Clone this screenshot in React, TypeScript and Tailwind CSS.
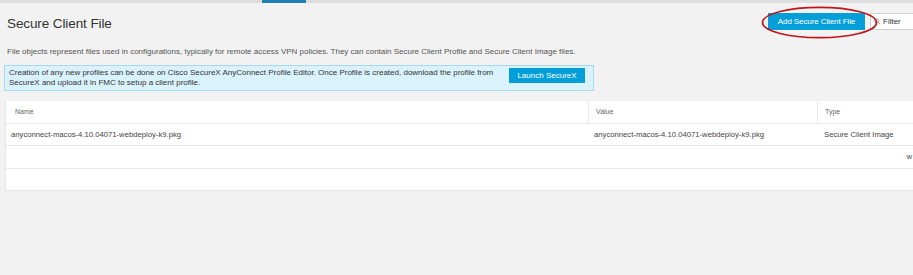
import React from "react";

export default function App() {
  const font = { fontFamily: '"Liberation Sans", Arial, sans-serif' };
  return (
    <div className="w-[913px] h-[275px] bg-[#f2f2f2] overflow-hidden text-[#333]" style={font}>
      {/* top tab strip */}
      <div className="flex h-[3px] bg-[#dedede]">
        <div className="w-[262px]" />
        <div className="w-[44px] bg-[#1f7fb6]" />
      </div>

      {/* header */}
      <div className="flex items-start justify-between pl-[7px] pt-[10px] h-[35px]">
        <h1 className="text-[13.5px] leading-[20px] mt-[1px] tracking-[-0.1px] text-[#333]">Secure Client File</h1>
        <div className="flex items-center relative">
          <button className="h-[17px] w-[97px] bg-[#049fd9] text-white text-[8px] leading-[17px] tracking-[-0.1px]">
            Add Secure Client File
          </button>
          <div className="ml-[5px] h-[17px] w-[43px] bg-white border border-[#cfcfcf] border-r-0 flex items-center pl-[3px] text-[8px] text-[#333]">
            <svg width="7" height="7" viewBox="0 0 10 10" className="mr-[2px]">
              <circle cx="4" cy="4" r="3" fill="none" stroke="#999" strokeWidth="1.2" />
              <line x1="6.2" y1="6.2" x2="9" y2="9" stroke="#999" strokeWidth="1.2" />
            </svg>
            Filter
          </div>
          <svg className="absolute left-[-7px] top-[-7px] pointer-events-none" width="118" height="33" viewBox="0 0 118 33">
            <ellipse cx="58.5" cy="16.5" rx="57" ry="15.2" fill="none" stroke="#c0141b" strokeWidth="1.8" />
          </svg>
        </div>
      </div>

      {/* description */}
      <p className="pl-[7px] text-[8px] leading-[12px] text-[#555] mt-[8px]">
        File objects represent files used in configurations, typically for remote access VPN policies. They can contain Secure Client Profile and Secure Client Image files.
      </p>

      {/* info box */}
      <div className="ml-[4px] mt-[7px] w-[590px] h-[26px] bg-[#daf2fc] border border-[#a6d8ef] flex items-center justify-between pl-[4px] pr-[8px]">
        <div className="text-[8px] leading-[10px] text-[#333]">
          <div>Creation of any new profiles can be done on Cisco SecureX AnyConnect Profile Editor. Once Profile is created, download the profile from</div>
          <div>SecureX and upload it in FMC to setup a client profile.</div>
        </div>
        <button className="h-[15px] w-[76px] bg-[#049fd9] text-white text-[8px] leading-[15px] -mt-[6px]">Launch SecureX</button>
      </div>

      {/* table */}
      <div className="ml-[5px] mt-[10px] bg-white border-l border-[#e6e6e6]">
        <div className="grid grid-cols-[582px_229px_1fr] h-[23px] border-b border-[#e8e8e8] text-[7px] text-[#666]">
          <div className="flex items-center pl-[9px]">Name</div>
          <div className="flex items-center pl-[7px] border-l border-[#e8e8e8]">Value</div>
          <div className="flex items-center pl-[7px] border-l border-[#e8e8e8]">Type</div>
        </div>
        <div className="grid grid-cols-[582px_229px_1fr] h-[22px] border-b border-[#e8e8e8] text-[7.7px] text-[#444]">
          <div className="flex items-center pl-[5px]">anyconnect-macos-4.10.04071-webdeploy-k9.pkg</div>
          <div className="flex items-center pl-[6px]">anyconnect-macos-4.10.04071-webdeploy-k9.pkg</div>
          <div className="flex items-center pl-[7px]">Secure Client Image</div>
        </div>
        <div className="h-[23px] border-b border-[#e8e8e8] flex items-center justify-end text-[7.7px] text-[#444]">
          <span className="mr-[1px]">w</span>
        </div>
        <div className="h-[22px] border-b border-[#e6e6e6]" />
      </div>
    </div>
  );
}
